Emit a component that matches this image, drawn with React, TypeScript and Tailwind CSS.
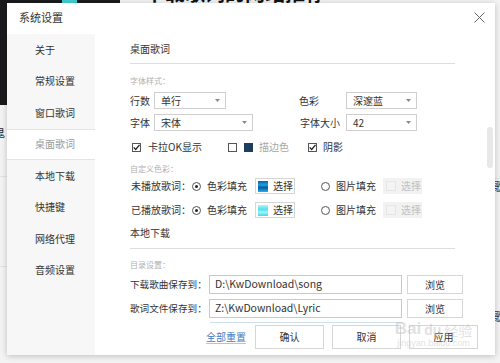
import React from "react";

function Checkbox({ checked }: { checked?: boolean }) {
  return (
    <span className="w-[9px] h-[9px] border border-[#555] bg-white flex items-center justify-center shrink-0">
      {checked && (
        <svg width="7" height="7" viewBox="0 0 7 7">
          <path d="M0.7 3.4 L2.7 5.5 L6.5 0.9" stroke="#222" strokeWidth="1.3" fill="none" />
        </svg>
      )}
    </span>
  );
}

function Radio({ checked }: { checked?: boolean }) {
  return (
    <span className="w-[9px] h-[9px] rounded-full border border-[#555] bg-white flex items-center justify-center shrink-0">
      {checked && <span className="w-[3px] h-[3px] rounded-full bg-[#222]" />}
    </span>
  );
}

function Arrow() {
  return (
    <svg width="5" height="3" viewBox="0 0 5 3">
      <path d="M0 0 L5 0 L2.5 3 Z" fill="#8a8a8a" />
    </svg>
  );
}

function SelectBox({ value, wide }: { value: string; wide?: string }) {
  return (
    <div className={`${wide} h-[17px] border border-[#cfcfcf] bg-white flex items-center justify-between pl-[6px] pr-[5px] text-[#333]`}>
      <span>{value}</span>
      <Arrow />
    </div>
  );
}

const sideItems = ["关于", "常规设置", "窗口歌词", "桌面歌词", "本地下载", "快捷键", "网络代理", "音频设置"];

export default function App() {
  return (
    <div className="relative w-[500px] h-[363px] overflow-hidden bg-[#f3f3f3] font-['Noto_Sans_CJK_SC','Microsoft_YaHei',sans-serif] text-[10px] leading-none text-[#333]">
      {/* background bits behind the window */}
      <div className="absolute left-0 top-0 w-[7px] h-[105px] bg-[#1b1a1c]" />
      <div className="absolute left-0 top-0 w-[62px] h-[4px] bg-[#1b1a1c]" />
      <div className="absolute left-[62px] top-0 w-[15px] h-[4px] bg-[#3fcfd0]" />
      <div className="absolute left-[77px] top-0 w-[43px] h-[4px] bg-[#1b1a1c]" />
      <div className="absolute left-[145px] top-[-17px] h-[21px] overflow-hidden font-bold text-[20px] text-[#111] whitespace-nowrap">下载歌词的网站推荐</div>
      <div className="absolute left-[-6px] top-[127px] text-[11px] text-[#222]">鬼</div>
      <div className="absolute left-[493px] top-[181px] text-[11px] text-[#333]">歌</div>
      <div className="absolute left-[493px] top-[311px] text-[11px] text-[#333]">歌</div>
      <div className="absolute left-[495px] top-[178px] w-[5px] h-px bg-[#e2e2e2]" />
      <div className="absolute left-0 top-[176px] w-[7px] h-px bg-[#e2e2e2]" />
      <div className="absolute left-0 top-[266px] w-[7px] h-px bg-[#e2e2e2]" />

      <div className="pl-[7px] pt-[3px]">
        <div className="relative w-[488px] h-[352px] bg-white shadow-[0_1px_6px_rgba(0,0,0,0.22)] flex flex-col">
          {/* title bar */}
          <div className="h-[31px] shrink-0 flex items-center justify-between pl-[12px] pr-[10px] pb-[2px]">
            <span className="text-[11px] text-[#333]">系统设置</span>
            <svg width="11" height="11" viewBox="0 0 11 11">
              <path d="M0.5 0.5 L10.5 10.5 M10.5 0.5 L0.5 10.5" stroke="#666" strokeWidth="1" />
            </svg>
          </div>

          <div className="flex flex-1 min-h-0">
            {/* sidebar */}
            <div className="w-[88px] shrink-0 bg-[#f7f7f7] flex flex-col">
              {sideItems.map((s) =>
                s === "桌面歌词" ? (
                  <div key={s} className="h-[31.5px] pl-[28px] flex items-center bg-white border-y border-[#e4e4e4] text-[#9a9a9a]">
                    {s}
                  </div>
                ) : (
                  <div key={s} className="h-[31.5px] pl-[28px] flex items-center text-[#333]">
                    {s}
                  </div>
                )
              )}
            </div>

            {/* content */}
            <div className="relative flex-1 pl-[35px] flex flex-col">
              <div className="absolute left-[392px] top-[93px] w-[6px] h-[41px] rounded-full bg-[#e8e8e8]" />

              <div className="w-[325px] h-[30px] flex items-center border-b border-[#dedede] text-[#333]">桌面歌词</div>

              <div className="mt-[8px] h-[18px] flex items-center text-[8px] text-[#b0b0b0]">字体样式：</div>

              <div className="mt-[2px] h-[17px] flex items-center">
                <span className="w-[24px]">行数</span>
                <SelectBox value="单行" wide="w-[72px]" />
                <span className="ml-[73px] w-[47px]">色彩</span>
                <SelectBox value="深邃蓝" wide="w-[71px]" />
              </div>

              <div className="mt-[5px] h-[17px] flex items-center">
                <span className="w-[24px]">字体</span>
                <SelectBox value="宋体" wide="w-[99px]" />
                <span className="ml-[47px] w-[46px] whitespace-nowrap">字体大小</span>
                <SelectBox value="42" wide="w-[71px]" />
              </div>

              <div className="mt-[7px] h-[18px] flex items-center">
                <div className="ml-[2px] w-[96px] flex items-center gap-[7px]">
                  <Checkbox checked />
                  <span>卡拉OK显示</span>
                </div>
                <div className="w-[80px] flex items-center">
                  <Checkbox />
                  <span className="ml-[7px] w-[9px] h-[9px] bg-[#1f3d5e]" />
                  <span className="ml-[6px] text-[#a8a8a8]">描边色</span>
                </div>
                <div className="flex items-center gap-[6px]">
                  <Checkbox checked />
                  <span>阴影</span>
                </div>
              </div>

              <div className="mt-[4px] h-[18px] flex items-center text-[8px] text-[#b0b0b0]">自定义色彩：</div>

              {[
                { label: "未播放歌词：", sw: "bg-[linear-gradient(to_bottom,#0f5d9e_0%,#1aa0e4_35%,#0c5a9a_60%,#22b0ee_100%)]" },
                { label: "已播放歌词：", sw: "bg-[linear-gradient(to_bottom,#a8f6ff_0%,#4fe0f2_40%,#a0f4ff_65%,#3fd6ee_100%)]" },
              ].map((r, i) => (
                <div key={r.label} className={`${i === 0 ? "mt-0" : "mt-[8px]"} h-[16px] flex items-center`}>
                  <span className="w-[62px] pl-px whitespace-nowrap">{r.label}</span>
                  <Radio checked />
                  <span className="ml-[6px] w-[48px]">色彩填充</span>
                  <div className="w-[40px] h-[16px] border border-[#d6d6d6] bg-white flex items-center pl-[2px]">
                    <span className={`w-[10px] h-[11px] ${r.sw}`} />
                    <span className="ml-[5px]">选择</span>
                  </div>
                  <span className="ml-[26px]">
                    <Radio />
                  </span>
                  <span className="ml-[6px] w-[47px]">图片填充</span>
                  <div className="w-[39px] h-[16px] bg-[#f2f2f2] flex items-center pl-[3px]">
                    <span className="w-[10px] h-[10px] border border-[#e6e6e6] bg-[#f4f4f4]" />
                    <span className="ml-[5px] text-[#c0c0c0]">选择</span>
                  </div>
                </div>
              ))}

              <div className="w-[325px] h-[31px] flex items-center border-b border-[#dedede] text-[#333]">本地下载</div>

              <div className="mt-[7px] h-[18px] flex items-center text-[8px] text-[#b0b0b0]">目录设置：</div>

              {[
                { label: "下载歌曲保存到：", path: "D:\\KwDownload\\song" },
                { label: "歌词文件保存到：", path: "Z:\\KwDownload\\Lyric" },
              ].map((r, i) => (
                <div key={r.label} className={`${i === 0 ? "mt-px" : "mt-[5px]"} h-[19px] flex items-center`}>
                  <span className="w-[79px] shrink-0 whitespace-nowrap text-[9.6px]">{r.label}</span>
                  <div className="w-[193px] shrink-0 h-[19px] border border-[#b4cde0] flex items-center pl-[5px] text-[10.5px] text-[#333]">
                    {r.path}
                  </div>
                  <div className="ml-[5px] w-[56px] shrink-0 h-[19px] border border-[#d6d6d6] flex items-center justify-center">浏览</div>
                </div>
              ))}

              <div className="ml-[80px] mt-[4px] w-[193px] h-px bg-[#cfe0ec]" />

              <div className="mt-[2px] h-[24px] flex items-center">
                <span className="ml-[76px] w-[49px] text-[#3f80c4] underline decoration-[#a9c7e6] underline-offset-2">全部重置</span>
                <div className="w-[69px] h-[24px] border border-[#d6d6d6] flex items-center justify-center">确认</div>
                <div className="ml-[8px] w-[69px] h-[24px] border border-[#d6d6d6] flex items-center justify-center">取消</div>
                <div className="ml-[8px] w-[69px] h-[24px] border border-[#d6d6d6] flex items-center justify-center">应用</div>
              </div>
            </div>
          </div>

          {/* watermark overlay */}
          <div className="absolute left-[376px] top-[317px] w-[101px] h-[32px] pointer-events-none flex flex-col items-center text-[rgba(195,195,195,0.5)]">
            <div className="flex items-end font-['Liberation_Sans',sans-serif] text-[17px] font-bold leading-none">
              <span>Bai</span>
              <span className="text-[14px] ml-[3px]">du</span>
              <span className="ml-[3px] text-[14px] font-['Noto_Sans_CJK_SC',sans-serif] font-normal">经验</span>
            </div>
            <div className="mt-[2px] text-[9px] font-['Liberation_Sans',sans-serif]">jingyan.baidu.com</div>
          </div>
        </div>
      </div>
    </div>
  );
}
